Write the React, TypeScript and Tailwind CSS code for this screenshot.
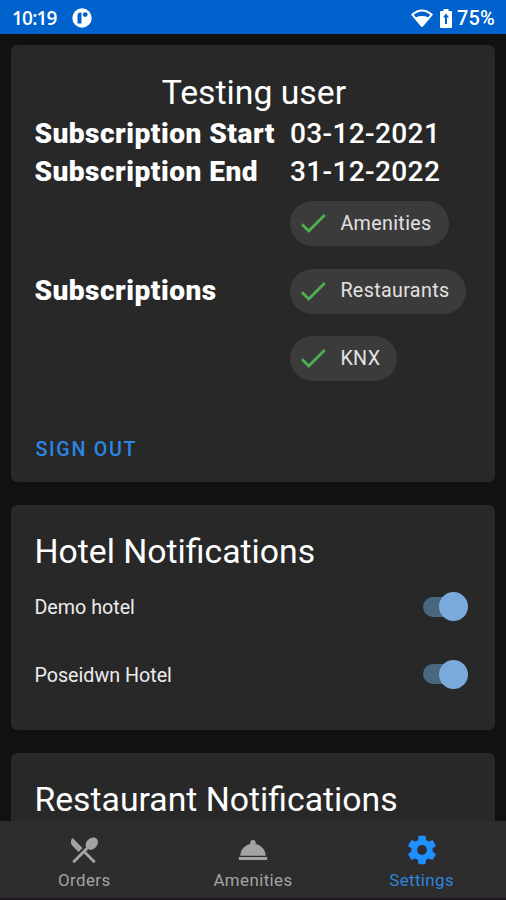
import { useState } from 'react'

interface IconProps {
  path: string
  className?: string
}

interface Venue {
  id: string
  name: string
}

const icons = {
  check: 'M21,7L9,19L3.5,13.5L4.91,12.09L9,16.17L19.59,5.59L21,7Z',
  orders:
    'M8.1,13.34L3.91,9.16C2.35,7.59 2.35,5.06 3.91,3.5L10.93,10.5L8.1,13.34M14.88,11.53L13.41,13L20.29,19.88L18.88,21.29L12,14.41L5.12,21.29L3.71,19.88L13.47,10.12C12.76,8.59 13.26,6.44 14.85,4.85C16.76,2.93 19.5,2.57 20.96,4.03C22.43,5.5 22.07,8.24 20.15,10.15C18.56,11.74 16.41,12.24 14.88,11.53Z',
  amenities:
    'M12,5A2,2 0 0,1 14,7C14,7.24 13.96,7.47 13.88,7.69C17.95,8.5 21,11.91 21,16H3C3,11.91 6.05,8.5 10.12,7.69C10.04,7.47 10,7.24 10,7A2,2 0 0,1 12,5M22,19H2V17H22V19Z',
  settings:
    'M12,15.5A3.5,3.5 0 0,1 8.5,12A3.5,3.5 0 0,1 12,8.5A3.5,3.5 0 0,1 15.5,12A3.5,3.5 0 0,1 12,15.5M19.43,12.97C19.47,12.65 19.5,12.33 19.5,12C19.5,11.67 19.47,11.34 19.43,11L21.54,9.37C21.73,9.22 21.78,8.95 21.66,8.73L19.66,5.27C19.54,5.05 19.27,4.96 19.05,5.05L16.56,6.05C16.04,5.66 15.5,5.32 14.87,5.07L14.5,2.42C14.46,2.18 14.25,2 14,2H10C9.75,2 9.54,2.18 9.5,2.42L9.13,5.07C8.5,5.32 7.96,5.66 7.44,6.05L4.95,5.05C4.73,4.96 4.46,5.05 4.34,5.27L2.34,8.73C2.21,8.95 2.27,9.22 2.46,9.37L4.57,11C4.53,11.34 4.5,11.67 4.5,12C4.5,12.33 4.53,12.65 4.57,12.97L2.46,14.63C2.27,14.78 2.21,15.05 2.34,15.27L4.34,18.73C4.46,18.95 4.73,19.03 4.95,18.95L7.44,17.94C7.96,18.34 8.5,18.68 9.13,18.93L9.5,21.58C9.54,21.82 9.75,22 10,22H14C14.25,22 14.46,21.82 14.5,21.58L14.87,18.93C15.5,18.67 16.04,18.34 16.56,17.94L19.05,18.95C19.27,19.03 19.54,18.95 19.66,18.73L21.66,15.27C21.78,15.05 21.73,14.78 21.54,14.63L19.43,12.97Z',
}

const subscriptions = ['Amenities', 'Restaurants', 'KNX']

const hotels: Venue[] = [
  { id: 'demo', name: 'Demo hotel' },
  { id: 'poseidwn', name: 'Poseidwn Hotel' },
]

const tabs = [
  { id: 'orders', label: 'Orders', icon: icons.orders },
  { id: 'amenities', label: 'Amenities', icon: icons.amenities },
  { id: 'settings', label: 'Settings', icon: icons.settings },
]

function Icon({ path, className }: IconProps) {
  return (
    <svg viewBox="0 0 24 24" fill="currentColor" className={className}>
      <path d={path} />
    </svg>
  )
}

function StatusBar() {
  return (
    <div className="flex h-[34px] shrink-0 items-center bg-[#0062cc] pt-0.5 pr-[11px] pl-3 text-white">
      <span className="w-[46px] font-['Open_Sans',sans-serif] text-[19px] leading-none font-semibold tracking-[-0.8px] whitespace-nowrap">
        10:19
      </span>
      <svg viewBox="0 0 20 20" className="ml-[14px] h-5 w-5">
        <circle cx="10" cy="10" r="9.7" fill="#fff" />
        <path d="M5.5 15.5V7.5Q5.5 4.5 8.6 4.5H9.500V15.5Z" fill="#0062cc" />
        <circle cx="13.2" cy="6.6" r="2.4" fill="#0062cc" />
      </svg>
      <div className="ml-auto flex items-center">
        <svg viewBox="0 0 22 19" className="h-[19px] w-[22px]">
          <path d="M1.3 5.6Q11 -2.6 20.7 5.6L11 17Z" fill="none" stroke="#fff" strokeWidth="2" strokeLinejoin="round" />
          <path d="M4.5 8.5Q11 5.6 17.5 8.5L11 17.5Z" fill="#fff" />
        </svg>
        <svg viewBox="0 0 12 19" className="ml-[7px] h-[19px] w-3">
          <path d="M3.5 0h5v2H11q1 0 1 1v15q0 1-1 1H1q-1 0-1-1V3q0-1 1-1h2.5Z" fill="#fff" />
          <path d="M6 4.5L9 8.5H7V15H5V8.5H3Z" fill="#0062cc" />
        </svg>
        <span className="ml-[5px] text-[20px] leading-none font-medium tracking-[0.2px]">75%</span>
      </div>
    </div>
  )
}

function Chip({ label }: { label: string }) {
  return (
    <div className="flex h-[45px] items-center self-start rounded-full bg-[#3b3b3b] pr-[17px] pl-[6px]">
      <Icon path={icons.check} className="-mt-px h-[34px] w-[34px] text-[#4caf50]" />
      <span className="ml-[10.5px] text-[19.7px] tracking-[0.35px] text-[#e2e2e2]">{label}</span>
    </div>
  )
}

function Toggle({ on, onChange }: { on: boolean; onChange: () => void }) {
  return (
    <button
      role="switch"
      aria-checked={on}
      onClick={onChange}
      className="-mt-px flex h-[29px] w-[46px] items-center"
    >
      <span className={`flex h-5 w-[42px] items-center rounded-full ${on ? 'justify-end bg-[#4a6780]' : 'bg-[#555555]'}`}>
        <span className={`-mr-[3px] h-[29px] w-[29px] shrink-0 rounded-full ${on ? 'bg-[#7aaadb]' : 'bg-[#bdbdbd]'}`} />
      </span>
    </button>
  )
}

export default function App() {
  const [activeTab, setActiveTab] = useState('settings')
  const [enabled, setEnabled] = useState<Record<string, boolean>>({ demo: true, poseidwn: true })

  const toggleHotel = (id: string) => {
    setEnabled((prev) => ({ ...prev, [id]: !prev[id] }))
  }

  return (
    <div className="flex h-[900px] w-[506px] flex-col overflow-hidden bg-[#111111] font-[Roboto,sans-serif] text-white">
      <StatusBar />

      <main className="flex min-h-0 flex-1 flex-col gap-[23px] overflow-hidden pt-[11px] pr-[10.6px] pl-[11.4px]">
        {/* Account card */}
        <section className="flex h-[437px] shrink-0 flex-col rounded-md bg-[#282828] px-[23px] pt-[27px]">
          <h1 className="pl-px text-center text-[33.75px] leading-[42px]">Testing user</h1>
          <div className="mt-px grid grid-cols-[255.5px_1fr] text-[28.1px] leading-[38px]">
            <span className="font-black tracking-[0.49px]">Subscription Start</span>
            <span className="font-medium tracking-[0.35px]">03-12-2021</span>
            <span className="font-black tracking-[0.49px]">Subscription End</span>
            <span className="font-medium tracking-[0.35px]">31-12-2022</span>
            <span className="self-center font-black tracking-[0.49px]">Subscriptions</span>
            <div className="flex flex-col gap-[22.5px] pt-[10px] pb-[10px]">
              {subscriptions.map((name) => (
                <Chip key={name} label={name} />
              ))}
            </div>
          </div>
          <button className="mt-[46px] self-start pl-px text-[19.7px] leading-[26px] font-medium tracking-[1.7px] text-[#2b87e3]">
            SIGN OUT
          </button>
        </section>

        {/* Hotel notifications */}
        <section className="h-[225px] shrink-0 rounded-md bg-[#282828] pt-[26px] pr-[26px] pl-[23px]">
          <h2 className="text-[33.75px] leading-[42px]">Hotel Notifications</h2>
          {hotels.map((hotel) => (
            <div key={hotel.id} className="flex h-[67.5px] items-start justify-between pt-[20px]">
              <span className="text-[19.7px] leading-[29px] text-[#ececec]">{hotel.name}</span>
              <Toggle on={enabled[hotel.id]} onChange={() => toggleHotel(hotel.id)} />
            </div>
          ))}
        </section>

        {/* Restaurant notifications, continues under the tab bar */}
        <section className="h-[225px] shrink-0 rounded-t-md bg-[#282828] px-[23px] pt-[26px]">
          <h2 className="text-[33.75px] leading-[42px]">Restaurant Notifications</h2>
        </section>
      </main>

      <nav className="grid h-[79px] shrink-0 grid-cols-3 border-b-2 border-[#1b161b] bg-[#2d2d2d]">
        {tabs.map((tab) => (
          <button
            key={tab.id}
            onClick={() => setActiveTab(tab.id)}
            className={`flex flex-col items-center pt-[12px] ${activeTab === tab.id ? 'text-[#1e90ff]' : 'text-[#a3a3a3]'}`}
          >
            <Icon path={tab.icon} className="h-[34px] w-[34px]" />
            <span className={`mt-[3px] text-[16.9px] leading-[20px] tracking-[0.4px] ${activeTab === tab.id ? 'text-[#2f84dc]' : ''}`}>
              {tab.label}
            </span>
          </button>
        ))}
      </nav>
    </div>
  )
}
